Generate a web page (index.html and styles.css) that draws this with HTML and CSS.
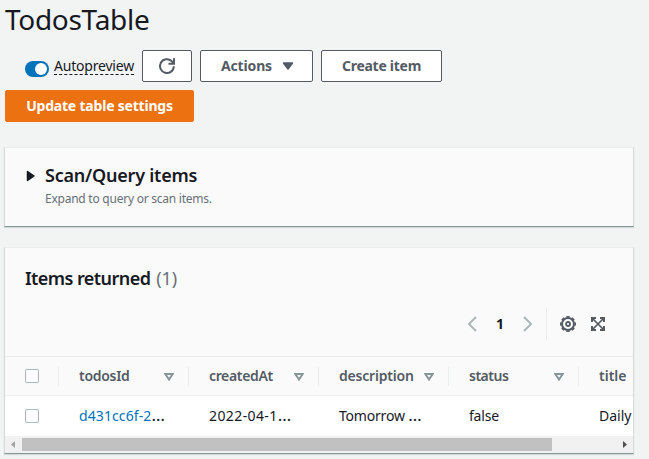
FILE: index.html
```html
<!DOCTYPE html>
<html lang="en">
<head>
<meta charset="utf-8">
<title>TodosTable</title>
<link rel="stylesheet" href="styles.css">
</head>
<body>
<header class="page-header">
  <h1 class="page-title">TodosTable</h1>
  <div class="actions">
    <span class="toggle"><span class="toggle-knob"></span></span>
    <span class="toggle-label">Autopreview</span>
    <button class="btn btn-icon" aria-label="Refresh">
      <svg width="18" height="18" viewBox="0 0 18 18" fill="none" stroke="currentColor" stroke-width="2"><path d="M15.800 9.200a6.900 6.900 0 1 1-2.200-5.100l2 2M16 1.200v5.600h-5.500"/></svg>
    </button>
    <button class="btn btn-menu"><span class="t-actions">Actions</span><svg width="12" height="8" viewBox="0 0 12 8"><path d="M1.500 1h9L6 7z" fill="currentColor" stroke="currentColor" stroke-width="1.500" stroke-linejoin="round"/></svg></button>
    <button class="btn btn-create"><span class="t-create">Create item</span></button>
  </div>
  <button class="btn btn-primary"><span class="t-update">Update table settings</span></button>
</header>
<section class="panel query">
  <svg class="caret" width="10" height="12" viewBox="0 0 10 12"><path d="M1.500 1.500v9L8 6z" fill="#16191f" stroke="#16191f" stroke-width="1.500" stroke-linejoin="round"/></svg>
  <div>
    <h2 class="heading t-scan">Scan/Query items</h2>
    <p class="hint">Expand to query or scan items.</p>
  </div>
</section>
<section class="panel results">
  <h2 class="heading results-title"><span class="t-items">Items returned</span><span class="count">(1)</span></h2>
  <div class="tools">
    <svg class="prev" width="10" height="16" viewBox="0 0 10 16"><path d="M9 1 2 8l7 7"/></svg>
    <span class="page">1</span>
    <svg class="next" width="10" height="16" viewBox="0 0 10 16"><path d="m1 1 7 7-7 7"/></svg>
    <span class="divider"></span>
    <svg class="gear" width="16" height="16" viewBox="0 0 16 16" fill="none" stroke="#545b64"><circle cx="8" cy="8" r="6" stroke-width="2"/><circle cx="8" cy="8" r="7.200" stroke-width="1.600" pathLength="80" stroke-dasharray="6 4" stroke-dashoffset="3"/><circle cx="8" cy="8" r="2" stroke-width="1.800"/></svg>
    <svg class="expand" width="16" height="16" viewBox="0 0 16 16" fill="none" stroke="#545b64" stroke-width="2"><path d="M2 6V2h4M10 2h4v4M14 10v4h-4M6 14H2v-4"/><path d="m2 2 12 12M14 2 2 14" stroke-width="1.700"/></svg>
  </div>
  <div class="table">
    <div class="row head">
      <div class="check"><span class="box"></span></div>
      <div class="cell"><span class="h-id">todosId</span><svg class="sort" width="10" height="8" viewBox="0 0 10 8"><path d="M1.300 1h7.400L5 6.500z"/></svg></div>
      <div class="cell"><span class="h-created">createdAt</span><svg class="sort" width="10" height="8" viewBox="0 0 10 8"><path d="M1.300 1h7.400L5 6.500z"/></svg></div>
      <div class="cell"><span class="h-desc">description</span><svg class="sort" width="10" height="8" viewBox="0 0 10 8"><path d="M1.300 1h7.400L5 6.500z"/></svg></div>
      <div class="cell"><span class="h-status">status</span><svg class="sort" width="10" height="8" viewBox="0 0 10 8"><path d="M1.300 1h7.400L5 6.500z"/></svg></div>
      <div class="cell"><span class="h-title">title</span></div>
    </div>
    <div class="row">
      <div class="check"><span class="box"></span></div>
      <div class="cell"><span class="v-id"><a class="link">d431cc6f-2</a><span class="more">…</span></span></div>
      <div class="cell"><span class="v-created">2022-04-1<span class="more">…</span></span></div>
      <div class="cell"><span class="v-desc">Tomorrow <span class="more">…</span></span></div>
      <div class="cell"><span class="v-status">false</span></div>
      <div class="cell"><span class="v-title">Daily</span></div>
    </div>
  </div>
  <div class="scrollbar">
    <svg width="17" height="17" viewBox="0 0 17 17"><path d="M10 5v7L6 8.500z" fill="#a3a3a3"/></svg>
    <span class="thumb"></span>
    <svg width="17" height="17" viewBox="0 0 17 17"><path d="M7 5v7l4-3.500z" fill="#505050"/></svg>
  </div>
</section>
</body>
</html>
```

FILE: styles.css
```css
* { box-sizing: border-box; }
body {
  margin: 0;
  padding: 0 15px 0 5px;
  height: 459px;
  overflow: hidden;
  background: #f2f3f3;
  color: #16191f;
  font: 14px/22px "Noto Sans", "Open Sans", sans-serif;
}
h1, h2, p { margin: 0; }
span, a { white-space: nowrap; }
svg { display: block; flex: none; }
.page-title { height: 50px; padding-top: 1px; font-size: 28px; line-height: 36px; font-weight: 400; letter-spacing: -0.3px; }
.actions { display: flex; align-items: center; height: 32px; padding-left: 20px; }
.toggle { width: 24px; height: 16px; margin-top: 6px; padding: 2px; border-radius: 8px; background: #0073bb; display: flex; justify-content: flex-end; }
.toggle-knob { width: 12px; height: 12px; border-radius: 50%; background: #fff; }
.toggle-label { width: 80px; height: 18px; margin: 0 8px 0 5px; line-height: 17px; letter-spacing: -0.2px; border-bottom: 1px dashed #16191f; }
.btn { display: flex; align-items: center; justify-content: center; height: 32px; padding: 0; border: 1px solid #545b64; border-radius: 2px; background: #fff; color: #545b64; font: 700 14px/22px "Noto Sans", sans-serif; }
.btn-icon { width: 50px; }
.btn-menu { width: 113px; margin: 0 8px; justify-content: flex-start; padding-left: 20px; gap: 10px; }
.t-actions { letter-spacing: -0.15px; }
.btn-create { width: 121px; letter-spacing: -0.27px; }
.btn-primary { width: 189px; margin-top: 8px; border-color: #ec7211; background: #ec7211; color: #fff; letter-spacing: -0.2px; }
.panel { margin-left: -1px; background: #fafafa; border: 1px solid #d5dbdb; border-top-color: #eaeded; border-bottom-color: #879596; box-shadow: 0 1px 1px #d5dbdb; }
.query { display: flex; height: 80px; margin-top: 25px; padding: 16px 0 0 21px; }
.caret { margin: 6px 9px 0 0; }
.heading { font-size: 18px; line-height: 22px; font-weight: 600; }
.t-scan { letter-spacing: -0.22px; }
.t-items { letter-spacing: -0.56px; }
.hint { font-size: 12px; line-height: 18px; margin-top: 4px; color: #687078; letter-spacing: -0.24px; }
.results { height: 207px; margin-top: 20px; overflow: hidden; }
.results-title { display: flex; height: 57px; padding: 19px 0 0 20px; gap: 6px; }
.count { font-weight: 400; color: #687078; letter-spacing: -0.2px; }
.tools { display: flex; align-items: center; justify-content: flex-end; height: 51px; padding: 0 27px 13px 0; }
.prev, .next { fill: none; stroke: #aab7b8; stroke-width: 2; }
.page { width: 46px; text-align: center; font-weight: 700; }
.divider { width: 1px; height: 32px; margin: 0 13px; background: #eaeded; }
.expand { margin: -1px 0 0 14px; }
.row { display: grid; grid-template-columns: 53px repeat(5, 130px); height: 40px; background: #fff; }
.head { background: #fafafa; border: solid #eaeded; border-width: 1px 0; color: #545b64; font-weight: 600; }
.check { padding: 13px 0 0 20px; }
.head .check { padding-top: 12px; }
.box { display: block; width: 14px; height: 14px; border: 1px solid #aab7b8; border-radius: 2px; background: #fff; }
.cell { display: flex; align-items: center; justify-content: space-between; padding: 0 14px 0 20px; border-left: 1px solid transparent; }
.head .cell { height: 19px; margin-top: 10px; border-left-color: #eaeded; }
.head .cell span { line-height: 16px; margin-top: -2px; }
.h-id { letter-spacing: -0.3px; }
.h-created { letter-spacing: -0.35px; }
.h-desc { letter-spacing: -0.2px; }
.h-status { letter-spacing: -0.5px; }
.v-id { letter-spacing: 0.1px; }
.v-created { letter-spacing: 0.4px; }
.v-desc { letter-spacing: -0.2px; }
.v-status { letter-spacing: -0.2px; }
.more { font-size: 17px; line-height: 1; }
.sort { fill: none; stroke: #879596; stroke-width: 2; }
.link { color: #0073bb; }
.scrollbar { display: flex; align-items: center; height: 17px; background: #f1f1f1; }
.thumb { width: 530px; height: 13px; margin-right: 64px; background: #c1c1c1; }
```
